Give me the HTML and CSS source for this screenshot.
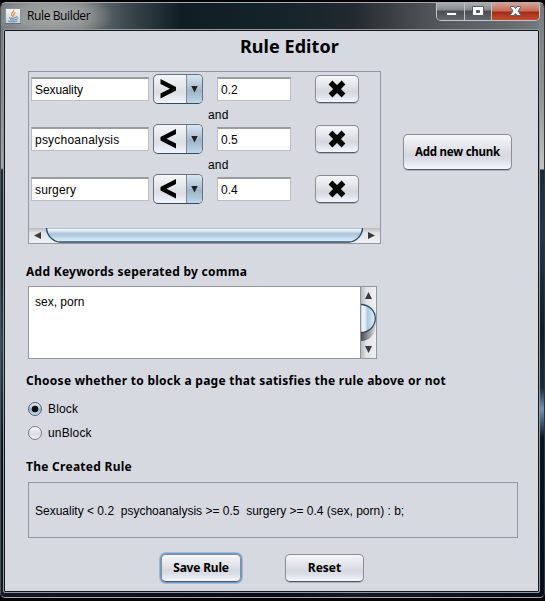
FILE: index.html
```html
<!DOCTYPE html>
<html lang="en">
<head>
<meta charset="utf-8">
<title>Rule Builder</title>
<link rel="stylesheet" href="styles.css">
</head>
<body>
<div class="window">
  <header class="titlebar">
    <svg class="java" width="16" height="16" viewBox="0 0 16 16"><defs><linearGradient id="jg" x2="0" y2="1"><stop stop-color="#f8f8f5"/><stop offset="1" stop-color="#c9d0d5"/></linearGradient></defs><rect x=".5" y=".5" width="15" height="15" fill="url(#jg)" stroke="#8197a8"/><path d="M0 15.5h16" stroke="#547592"/><path d="M8.7 1.8c1 2-3.2 3-2 5 .4.9 1.2 1.3.8 2.2M10.5 4.5c-3 1.3-1 2-2 4" fill="none" stroke="#ee902f" stroke-width="1.3"/><path d="M4 9.5c1 1 5 1 7 0M5 11.5c2 .7 4 .6 6 0M3 13c3 1.2 7 1 9.5-.2M11 9c2.8-.6 2.4 2.3.2 2.5" fill="none" stroke="#6087a7"/></svg>
    <span class="caption">Rule Builder</span>
    <div class="controls">
      <div class="ctl min"><svg width="28" height="18"><rect x="9.500" y="9.500" width="10" height="3" fill="#fff" stroke="#555d66"/></svg></div>
      <div class="ctl max"><svg width="26" height="18"><path d="M7.500 3.500h11v9h-11zM11.500 7.500h3v2h-3z" fill="#fff" fill-rule="evenodd" stroke="#555d66"/></svg></div>
      <div class="ctl close"><svg width="46" height="18"><path d="M18.500 3.500h3.500l1.500 2 1.500-2h3.500v1l-2.500 3.500 2.500 3.500v1H25l-1.500-2-1.500 2h-3.500v-1L21 8l-2.500-3.500z" fill="#fff" stroke="#56616d"/></svg></div>
    </div>
  </header>
  <main class="client">
    <h1>Rule Editor</h1>
    <div class="top">
      <section class="rules">
        <div class="rows">
          <div class="row"><div class="field name"><span class="t-sex">Sexuality</span></div><div class="combo"><svg width="32" height="28"><path d="M6.500 4v5l9.500 4.700L6.500 18.500v5L22 15.600v-3.500z"/></svg><i></i></div><div class="field value">0.2</div><button class="btn remove"><svg width="20" height="20" viewBox="0 0 20 20"><path d="M3.500 3.500l13 13m0-13l-13 13"/></svg></button></div>
          <div class="and">and</div>
          <div class="row"><div class="field name"><span class="t-psy">psychoanalysis</span></div><div class="combo"><svg width="32" height="28"><path d="M22 4v5l-9.500 4.700 9.500 4.800v5L6.500 15.600v-3.500z"/></svg><i></i></div><div class="field value">0.5</div><button class="btn remove"><svg width="20" height="20" viewBox="0 0 20 20"><path d="M3.500 3.500l13 13m0-13l-13 13"/></svg></button></div>
          <div class="and">and</div>
          <div class="row"><div class="field name"><span class="t-sur">surgery</span></div><div class="combo"><svg width="32" height="28"><path d="M22 4v5l-9.500 4.700 9.500 4.800v5L6.500 15.600v-3.500z"/></svg><i></i></div><div class="field value">0.4</div><button class="btn remove"><svg width="20" height="20" viewBox="0 0 20 20"><path d="M3.500 3.500l13 13m0-13l-13 13"/></svg></button></div>
        </div>
        <svg class="hbar" width="351" height="15"><defs><linearGradient id="track" x2="0" y2="1"><stop stop-color="#b7bac0"/><stop offset=".3" stop-color="#dfe1e4"/><stop offset="1" stop-color="#f0f1f2"/></linearGradient><linearGradient id="thumb" x2="0" y2="1"><stop stop-color="#8fa9bd"/><stop offset=".1" stop-color="#f2f6fa"/><stop offset=".25" stop-color="#d4e2ed"/><stop offset=".42" stop-color="#a8c2d6"/><stop offset="1" stop-color="#e1f4ff"/></linearGradient></defs><rect width="351" height="15" fill="url(#track)"/><path d="M17.500 0C17.500 7 24 14 31 14H320C327 14 333.500 7 333.500 0z" fill="url(#thumb)"/><path d="M17.500 0C17.500 7 24 14 31 14H320C327 14 333.500 7 333.500 0" fill="none" stroke="#2d4b64" stroke-width="1.400"/><path d="M5 7.500l7-3.500v7zM346 7.500l-7-3.500v7z" fill="#383a3f"/></svg>
      </section>
      <button class="btn add"><span class="t-add">Add new chunk</span></button>
    </div>
    <h2 class="h-key"><span>Add Keywords seperated by comma</span></h2>
    <div class="keywords"><div class="area"><span class="t-key">sex, porn</span></div>
      <svg width="15" height="71"><defs><linearGradient id="vt"><stop stop-color="#b7bac0"/><stop offset=".35" stop-color="#e1e3e6"/><stop offset="1" stop-color="#f0f1f2"/></linearGradient><linearGradient id="vb"><stop stop-color="#b5cbdc"/><stop offset=".12" stop-color="#f3f7fb"/><stop offset=".35" stop-color="#d5e3ee"/><stop offset=".45" stop-color="#afc8da"/><stop offset="1" stop-color="#e0f2ff"/></linearGradient><linearGradient id="vs"><stop stop-color="#4c4e52"/><stop offset="1" stop-color="#dfe1e4"/></linearGradient></defs><rect width="15" height="71" fill="url(#vt)"/><path d="M0 37h15c0 10-6 17-15 17z" fill="url(#vs)"/><path d="M0 17.500C7 17.500 14.300 23 14.300 31.500S7 45.500 0 45.500z" fill="url(#vb)"/><path d="M0 17.500C7 17.500 14.300 23 14.300 31.500S7 45.500 0 45.500" fill="none" stroke="#2d4b64" stroke-width="1.300"/><path d="M7.500 5l3.500 7H4zM7.500 66l3.500-7H4z" fill="#383a3f"/></svg>
    </div>
    <h2 class="h-choose"><span>Choose whether to block a page that satisfies the rule above or not</span></h2>
    <div class="radios">
      <label><b class="radio on"></b><span class="t-block">Block</span></label>
      <label><b class="radio"></b><span class="t-unblock">unBlock</span></label>
    </div>
    <h2 class="h-created"><span>The Created Rule</span></h2>
    <div class="created"><span>Sexuality &lt; 0.2&nbsp; psychoanalysis &gt;= 0.5&nbsp; surgery &gt;= 0.4 (sex, porn) : b;</span></div>
    <div class="actions"><button class="btn save"><span>Save Rule</span></button><button class="btn reset"><span>Reset</span></button></div>
  </main>
</div>
</body>
</html>
```
FILE: styles.css
```css
* { box-sizing: border-box; }
html, body { margin: 0; height: 601px; overflow: hidden; background: #050306; }
body { padding-top: 2px; font: 12px/14px "Liberation Sans", sans-serif; color: #000; }
svg { display: block; flex: none; }
.window {
  width: 545px; height: 596px; padding: 0 3px;
  border: 1px solid #a9abad; border-left-color: #4d5357; border-right-color: #30383c;
  border-radius: 6px 6px 5px 5px;
  background:
    radial-gradient(ellipse 62px 24px at 50px 13px, #a6a8a7 0, #9b9e9ecc 55%, transparent 100%) no-repeat,
    linear-gradient(#747a7c 0, #929697 95px, #c2c3c4 166px, #1c2a34 167px, #253745 230px, #121c25 330px, #1c2a36 385px, #7196b5 406px, #0b1520 435px, #07111d 560px, #080b13) right / 6px 100% no-repeat,
    linear-gradient(#6e7476 0, #8a8f91 100px, #a5a8a9 165px, #202c35 167px, #1b2731 270px, #2c4557 340px, #0c1520 450px, #111c24) left / 4px 100% no-repeat,
    linear-gradient(90deg, #6f7577 0, #747a7c 80px, #39454b 130px, #101d25 180px, #14222a 270px, #20292e 350px, #414448 400px, #53575b 435px, #62696d 500px, #747a7c) top / 100% 29px no-repeat,
    linear-gradient(90deg, #101720, #070b15 50%, #171925 65%, #070b15);
}
.titlebar { height: 26px; display: flex; align-items: flex-start; padding-left: 1px; }
.java { margin-top: 5px; }
.caption { font: 12px/16px "Open Sans", sans-serif; letter-spacing: -.38px; margin: 5px 0 0 6px; width: 110px; white-space: nowrap; }
.controls { display: flex; margin-left: auto; margin-right: 1px; width: 104px; height: 18px; border: 1px solid #c2c6c8; border-top: 0; border-radius: 0 0 5px 5px; overflow: hidden; }
.ctl { height: 17px; background: linear-gradient(#a9adaf 0, #858a8d 7px, #484f53 8px, #62696d 100%); border-right: 1px solid #bfc2c3; }
.min { width: 28px; }
.max { width: 27px; }
.close { width: 47px; border: 0; background: linear-gradient(#d8a092 0, #c36d59 8px, #a52a12 9px, #c54c2d 100%); }
.client { height: 564px; width: 537px; border: 1px solid #92979a; border-radius: 2px; box-shadow: inset 0 0 0 1px #11171c; background: #d6d9e0; padding: 1px; margin-left: -1px; }
h1, h2 { margin: 0; white-space: nowrap; font-family: "Noto Sans", sans-serif; font-weight: 700; }
h1 { font-size: 18px; line-height: 30px; height: 40px; padding-left: 235px; letter-spacing: .05px; }
.top { display: flex; align-items: flex-start; padding-left: 23px; }
.rules { width: 353px; height: 173px; border: 1px solid #9297a1; }
.rows { height: 156px; padding: 2px 0 0 2px; }
.row { display: flex; align-items: center; height: 30px; }
.and { height: 20px; padding: 3px 0 0 177px; line-height: 16px; letter-spacing: .2px; }
.field { height: 24px; background: #fff; border: 1px solid #bcbec3; border-top: 2px solid #999ca1; padding: 4px 0 0 3px; white-space: nowrap; }
.name { width: 118px; }
.t-sex { letter-spacing: -.1px; }
.t-psy { letter-spacing: .22px; }
.t-sur { letter-spacing: .15px; }
.value { width: 74px; margin-left: 14px; }
.combo { display: flex; width: 50px; height: 30px; margin-left: 4px; border: 1px solid #66717d; border-bottom-color: #33495c; border-radius: 5px; overflow: hidden; background: linear-gradient(#f5f6f8, #dee0e6 55%, #dcdfe5 65%, #f2f5fb); }
.combo i { flex: 1; border-left: 1px solid #768b9d; background: linear-gradient(#d9e6f1, #aabdcd 50%, #9eb4c6 54%, #bed6e9); display: grid; place-items: center; }
.combo i::after { content: ""; width: 7px; height: 7px; background: #202326; clip-path: polygon(0 0, 100% 0, 50% 100%); }
.btn { display: flex; align-items: center; justify-content: center; padding: 0; color: #000; border: 1px solid #8b8d93; border-bottom-color: #55595f; border-radius: 5px; background: linear-gradient(#f5f6f8 0, #e4e6ea 35%, #d6d8df 60%, #dce0e8 75%, #f4f7fe 100%); box-shadow: 0 1px 0 #aeb2ba; font: 700 12px/16px "Noto Sans", sans-serif; white-space: nowrap; }
.remove { width: 44px; height: 28px; margin-left: 24px; }
.remove path { stroke: #000; stroke-width: 5.4; fill: none; }
.add { width: 109px; height: 36px; margin: 63px 0 0 22px; }
.t-add { font-size: 11.5px; letter-spacing: -.22px; }
h2 { font-size: 12px; line-height: 16px; padding-left: 21px; letter-spacing: .27px; }
.h-key { margin-top: 20px; height: 22px; }
.keywords { display: flex; width: 349px; height: 73px; margin-left: 23px; border: 1px solid #9297a1; background: #fff; }
.area { flex: 1; border-right: 1px solid #8d9299; padding: 8px 0 0 6px; }
.h-choose { margin-top: 14px; height: 29px; }
.radios { padding-left: 23px; letter-spacing: .15px; }
.radios label { display: flex; align-items: center; height: 14px; margin-bottom: 10px; }
.radio { width: 14px; height: 14px; border: 1px solid #777b82; border-radius: 50%; margin-right: 6px; background: linear-gradient(#fafafb, #d9dbe0 60%, #f1f3f8); }
.radio.on { border-color: #4a6275; background: radial-gradient(circle, #111 0, #111 3px, transparent 3.7px), linear-gradient(#e2edf5, #9db5c7 60%, #c8e0f2); }
.h-created { margin-top: 19px; height: 23px; }
.created { margin-left: 23px; width: 490px; height: 56px; border: 1px solid #9297a1; padding: 21px 0 0 6px; white-space: nowrap; }
.actions { display: flex; margin: 16px 0 0 156px; gap: 44px; }
.save { width: 80px; height: 28px; letter-spacing: -.2px; box-shadow: 0 0 0 1px #6b9bc8, 0 0 0 2px #9fbbd6; }
.reset { width: 79px; height: 28px; }
```
